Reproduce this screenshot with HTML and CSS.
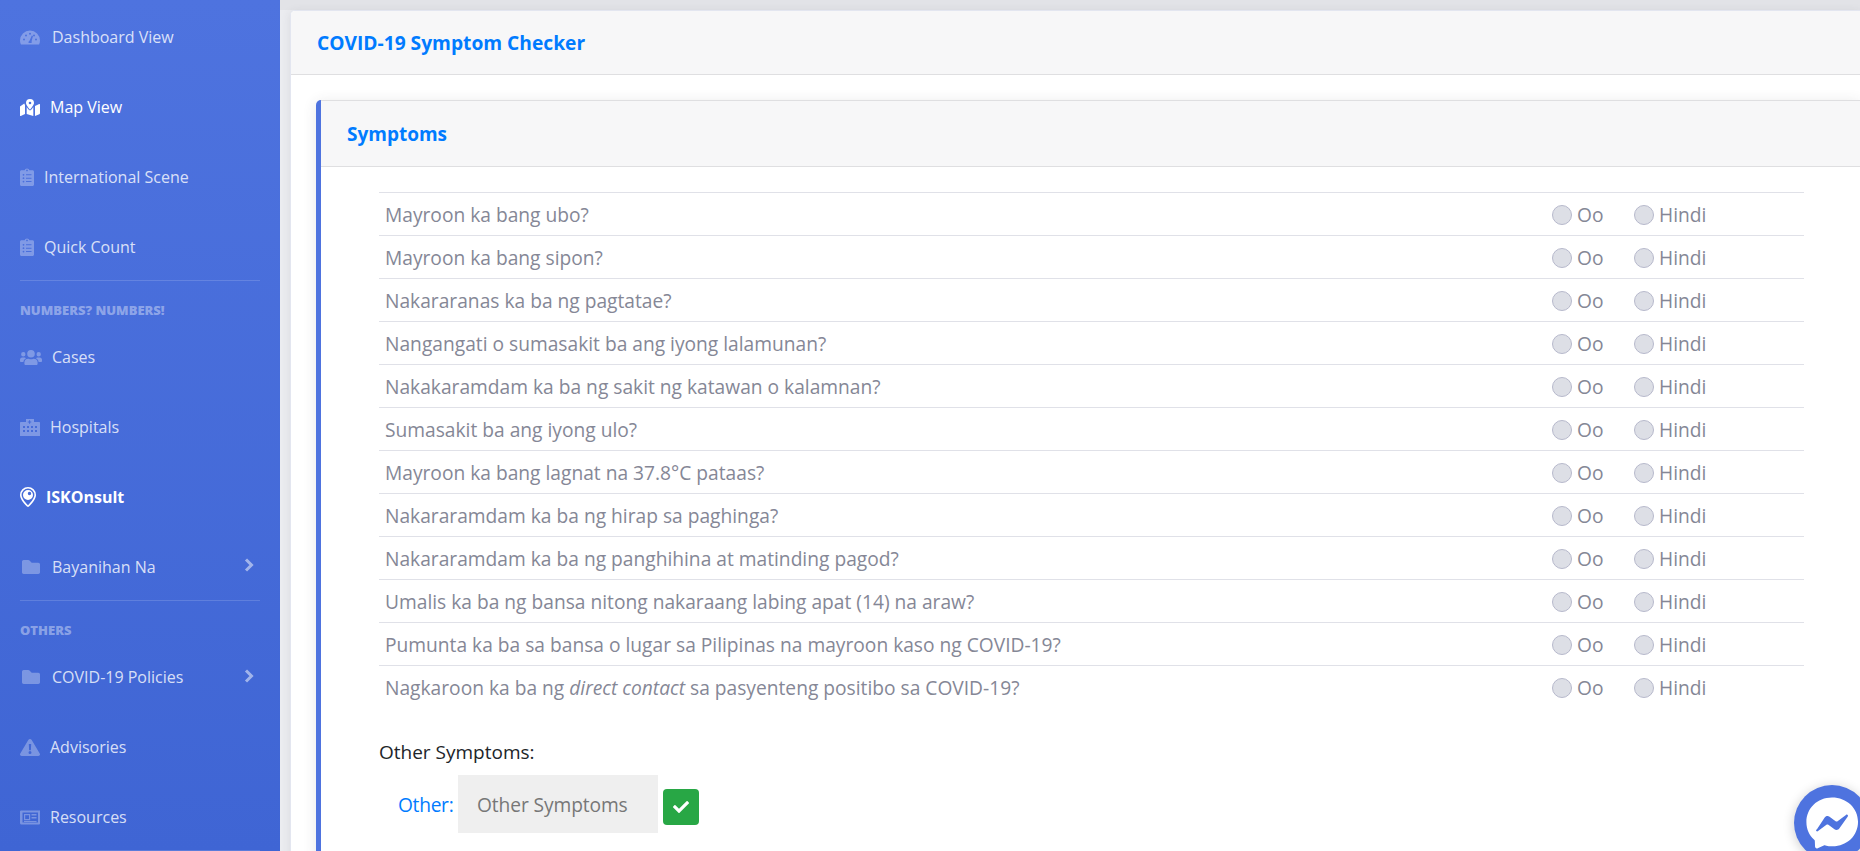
FILE: index.html
```html
<!DOCTYPE html>
<html lang="tl">
<head>
<meta charset="utf-8">
<title>COVID-19 Symptom Checker</title>
<link rel="stylesheet" href="styles.css">
</head>
<body>
<div class="layout">
  <nav class="sidebar">
    <a class="nav-item"><svg class="ic ic-dash" viewBox="0 0 20 14"><path d="M10 0a10 10 0 0 0-10 10c0 1.500.3 2.800.9 4h18.200c.6-1.200.9-2.500.9-4a10 10 0 0 0-10-10zm0 2.200a1 1 0 1 1 0 2 1 1 0 0 1 0-2zM4 10a1 1 0 1 1 0-2 1 1 0 0 1 0 2zm2-4a1 1 0 1 1 0-2 1 1 0 0 1 0 2zm5.400 6.500H8.600a1.700 1.700 0 0 1 .9-2.200L11.800 5l1.200.4-1.400 5.300c.3.500.1 1.300-.2 1.800zM14 6a1 1 0 1 1 0-2 1 1 0 0 1 0 2zm2 4a1 1 0 1 1 0-2 1 1 0 0 1 0 2z"/></svg><span class="t-dash">Dashboard View</span></a>
    <a class="nav-item active"><svg class="ic ic-wide" viewBox="0 0 20 17"><path fill-rule="evenodd" d="M10 0a4 4 0 0 0-4 4c0 1.800 2.600 5 3.600 6.200.2.300.6.300.8 0C11.400 9 14 5.800 14 4a4 4 0 0 0-4-4zm0 5.300a1.300 1.300 0 1 1 0-2.600 1.300 1.300 0 0 1 0 2.600zM.7 6.900A1.100 1.100 0 0 0 0 8v8.500c0 .4.400.7.800.5L5 15V6.200c-.3-.6-.5-1.100-.7-1.700L.7 6.900zM10 11.300c-.5 0-.9-.2-1.200-.6-.7-.8-1.400-1.700-2.100-2.700V15l6.600 2V8c-.6 1-1.400 1.900-2.100 2.700-.3.400-.7.600-1.200.6zM19.200 5.100 15 7v10l4.300-1.700c.4-.2.700-.6.700-1V5.600c0-.4-.4-.7-.8-.5z"/></svg><span class="t-map">Map View</span></a>
    <a class="nav-item"><svg class="ic ic-clip" viewBox="0 0 14 18"><use href="#clip"/></svg><span class="t-clip">International Scene</span></a>
    <a class="nav-item"><svg class="ic ic-clip" viewBox="0 0 14 18"><use href="#clip"/></svg><span class="t-clip">Quick Count</span></a>
    <hr class="divider">
    <div class="heading">NUMBERS? NUMBERS!</div>
    <a class="nav-item"><svg class="ic ic-users" viewBox="0 0 22 15"><path d="M3.300 6.500a2.200 2.200 0 1 0 0-4.400 2.200 2.200 0 0 0 0 4.400zm15.400 0a2.200 2.200 0 1 0 0-4.400 2.200 2.200 0 0 0 0 4.400zm1.100 1.100h-2.200c-.6 0-1.200.2-1.600.6 1.400.8 2.400 2.100 2.600 3.800h2.300c.6 0 1.100-.5 1.100-1.100V9.800c0-1.200-1-2.200-2.200-2.200zm-8.800 0A3.800 3.800 0 1 0 11 0a3.800 3.800 0 0 0 0 7.600zm2.600 1.100h-.3a5.300 5.300 0 0 1-4.600 0h-.3A4 4 0 0 0 4.400 12.700v1c0 .7.500 1.300 1.300 1.300h10.600c.8 0 1.300-.6 1.300-1.300v-1a4 4 0 0 0-4-4zM6 8.200c-.4-.4-1-.6-1.600-.6H2.200C1 7.600 0 8.600 0 9.800v1.100c0 .6.500 1.100 1.100 1.100h2.300c.2-1.700 1.200-3 2.600-3.800z"/></svg><span class="t-users">Cases</span></a>
    <a class="nav-item"><svg class="ic ic-wide" viewBox="0 0 20 17"><path fill-rule="evenodd" d="M6 0h8v3h5c.6 0 1 .4 1 1v13H0V4c0-.6.400-1 1-1h5V0zm3 1.300v1.200H7.800v1.100H9v1.200h1.100V3.600h1.200V2.500h-1.200V1.300H9zM3 7v2h2V7H3zm4 0v2h2V7H7zm4 0v2h2V7h-2zm4 0v2h2V7h-2zM3 11v2h2v-2H3zm4 0v2h2v-2H7zm4 0v2h2v-2h-2zm4 0v2h2v-2h-2z"/></svg><span class="t-map">Hospitals</span></a>
    <a class="nav-item active strong"><svg class="ic ic-pin" viewBox="0 0 16 20"><path fill-rule="evenodd" d="M8 0a8 8 0 0 0-8 8c0 3.200 2.800 7.600 7 11.600.6.500 1.400.5 2 0 4.200-4 7-8.400 7-11.600a8 8 0 0 0-8-8zm0 1.600A6.400 6.400 0 0 1 14.400 8c0 2.500-2.400 6.300-6.400 10.200C4 14.300 1.600 10.500 1.600 8A6.400 6.400 0 0 1 8 1.600zM8 3a5 5 0 1 0 0 10A5 5 0 0 0 8 3zm1.500 1.800a1.700 1.700 0 1 1 0 3.400 1.700 1.700 0 0 1 0-3.400z"/></svg><span class="t-pin">ISKOnsult</span></a>
    <a class="nav-item nav-tree"><svg class="ic ic-folder" viewBox="0 0 18 14"><path d="M16.300 2.700H9.700L7.500.5C7.200.200 6.800 0 6.300 0H1.700C.8 0 0 .8 0 1.700v10.600C0 13.200.8 14 1.700 14h14.600c.9 0 1.700-.8 1.700-1.700V4.400c0-.9-.8-1.700-1.700-1.700z"/></svg><span class="t-folder">Bayanihan Na</span><svg class="chev" viewBox="0 0 10 14"><path d="M2 1.500 7.500 7 2 12.500" fill="none" stroke="currentColor" stroke-width="3"/></svg></a>
    <hr class="divider">
    <div class="heading">OTHERS</div>
    <a class="nav-item nav-tree nav-policies"><svg class="ic ic-folder" viewBox="0 0 18 14"><path d="M16.300 2.700H9.700L7.500.5C7.200.200 6.800 0 6.300 0H1.700C.8 0 0 .8 0 1.700v10.600C0 13.200.8 14 1.700 14h14.600c.9 0 1.700-.8 1.700-1.700V4.400c0-.9-.8-1.700-1.700-1.700z"/></svg><span class="t-folder">COVID-19 Policies</span><svg class="chev" viewBox="0 0 10 14"><path d="M2 1.500 7.500 7 2 12.500" fill="none" stroke="currentColor" stroke-width="3"/></svg></a>
    <a class="nav-item"><svg class="ic ic-wide" viewBox="0 0 20 17"><path fill-rule="evenodd" d="M8.300 1 .3 14.500C-.5 15.800.4 17 1.700 17h16.600c1.300 0 2.200-1.200 1.400-2.500L11.700 1c-.8-1.300-2.600-1.300-3.400 0zM8.800 5h2.400l-.3 6.200H9.100L8.800 5zM10 15a1.500 1.500 0 1 1 0-3 1.500 1.500 0 0 1 0 3z"/></svg><span class="t-map">Advisories</span></a>
    <a class="nav-item"><svg class="ic ic-wide" viewBox="0 0 20 14"><path fill-rule="evenodd" d="M1 0h19v13a1 1 0 0 1-1 1H1.500A1.500 1.500 0 0 1 0 12.500V1a1 1 0 0 1 1-1zm1.500 2v10H18V2H2.500zM4 3.500h6.200v6.200H4V3.500zm1.200 1.200v3.800H9V4.700H5.200zM11.500 3.500h5v1.500h-5V3.500zm0 3h5V8h-5V6.500zM4 10.500h12.500v1H4v-1z"/></svg><span class="t-map">Resources</span></a>
    <hr class="divider">
  </nav>

  <main class="content">
    <section class="page-card">
      <header class="page-head">COVID-19 Symptom Checker</header>
      <div class="page-body">
        <section class="card">
          <header class="card-head">Symptoms</header>
          <div class="card-body">
            <table class="questions">
              <tr><td>Mayroon ka bang ubo?</td><td class="opt"><span class="radio"></span>Oo</td><td class="opt"><span class="radio"></span>Hindi</td></tr>
              <tr><td>Mayroon ka bang sipon?</td><td class="opt"><span class="radio"></span>Oo</td><td class="opt"><span class="radio"></span>Hindi</td></tr>
              <tr><td>Nakararanas ka ba ng pagtatae?</td><td class="opt"><span class="radio"></span>Oo</td><td class="opt"><span class="radio"></span>Hindi</td></tr>
              <tr><td>Nangangati o sumasakit ba ang iyong lalamunan?</td><td class="opt"><span class="radio"></span>Oo</td><td class="opt"><span class="radio"></span>Hindi</td></tr>
              <tr><td>Nakakaramdam ka ba ng sakit ng katawan o kalamnan?</td><td class="opt"><span class="radio"></span>Oo</td><td class="opt"><span class="radio"></span>Hindi</td></tr>
              <tr><td>Sumasakit ba ang iyong ulo?</td><td class="opt"><span class="radio"></span>Oo</td><td class="opt"><span class="radio"></span>Hindi</td></tr>
              <tr><td>Mayroon ka bang lagnat na 37.8°C pataas?</td><td class="opt"><span class="radio"></span>Oo</td><td class="opt"><span class="radio"></span>Hindi</td></tr>
              <tr><td>Nakararamdam ka ba ng hirap sa paghinga?</td><td class="opt"><span class="radio"></span>Oo</td><td class="opt"><span class="radio"></span>Hindi</td></tr>
              <tr><td>Nakararamdam ka ba ng panghihina at matinding pagod?</td><td class="opt"><span class="radio"></span>Oo</td><td class="opt"><span class="radio"></span>Hindi</td></tr>
              <tr><td>Umalis ka ba ng bansa nitong nakaraang labing apat (14) na araw?</td><td class="opt"><span class="radio"></span>Oo</td><td class="opt"><span class="radio"></span>Hindi</td></tr>
              <tr><td>Pumunta ka ba sa bansa o lugar sa Pilipinas na mayroon kaso ng COVID-19?</td><td class="opt"><span class="radio"></span>Oo</td><td class="opt"><span class="radio"></span>Hindi</td></tr>
              <tr class="last-row"><td>Nagkaroon ka ba ng <em>direct contact</em> sa pasyenteng positibo sa COVID-19?</td><td class="opt"><span class="radio"></span>Oo</td><td class="opt"><span class="radio"></span>Hindi</td></tr>
            </table>
            <p class="other-title">Other Symptoms:</p>
            <div class="other-row">
              <span class="other-label">Other:</span>
              <span class="other-input">Other Symptoms</span>
              <span class="check-btn"><svg viewBox="0 0 512 512"><path fill="#fff" d="M174 439 7 273a25 25 0 0 1 0-36l36-36a25 25 0 0 1 36 0l113 112L433 73a25 25 0 0 1 36 0l36 36a25 25 0 0 1 0 36L210 439a25 25 0 0 1-36 0z"/></svg></span>
            </div>
          </div>
        </section>
      </div>
    </section>
  </main>
</div>

<div class="messenger"><svg viewBox="0 0 60 60"><path fill="#fff" d="M30 6C16 6 6 16.200 6 29c0 6.800 2.800 12.600 7.300 16.600.4.300.6.800.6 1.300l.2 5.100c0 1.300 1.300 2.200 2.500 1.600l5.700-2.500c.5-.2 1-.2 1.500-.1 2 .6 4.200.9 6.600.9 14 0 24-10.200 24-23S44 6 30 6z"/><path fill="#4e73df" d="M15.600 36.400 23 25c1-1.600 3.200-2 4.700-.9l5.700 4.300c.6.400 1.300.4 1.800 0l7.900-6c1-.800 2.400.4 1.700 1.500L37 35c-1 1.600-3.200 2-4.700.9l-5.700-4.300c-.6-.4-1.300-.4-1.800 0l-7.900 6c-1 .8-2.400-.4-1.700-1.500z"/></svg></div>

<svg class="defs" aria-hidden="true"><defs><symbol id="clip" viewBox="0 0 14 18"><path fill-rule="evenodd" d="M12.500 2.300H9.400a2.500 2.500 0 0 0-4.800 0H1.500C.7 2.300 0 3 0 3.800v12.700c0 .8.700 1.500 1.500 1.500h11c.8 0 1.500-.7 1.500-1.500V3.800c0-.8-.7-1.500-1.500-1.500zM3.500 14.500a.9.900 0 1 1 0-1.800.9.900 0 0 1 0 1.800zm0-3.400a.9.900 0 1 1 0-1.800.9.900 0 0 1 0 1.800zm0-3.400a.9.900 0 1 1 0-1.800.9.900 0 0 1 0 1.800zM7 1.500a.9.900 0 1 1 0 1.800.9.900 0 0 1 0-1.800zm4.500 12.600h-5.500v-1h5.500v1zm0-3.400h-5.500v-1h5.500v1zm0-3.400h-5.500v-1h5.500v1z"/></symbol></defs></svg>
</body>
</html>
```
FILE: styles.css
```css
* { box-sizing: border-box; }
html, body { margin: 0; height: 100%; overflow: hidden; }
body { font-family: "Open Sans", "Noto Sans", sans-serif; background: #fff; color: #858796; }
.defs { width: 0; height: 0; position: absolute; }
.layout { display: flex; height: 851px; overflow: hidden; }

.sidebar {
  width: 280px; flex: none; padding: 2px 20px 0;
  background: linear-gradient(180deg, #4e73df 0%, #3f65d4 100%);
  color: rgba(255,255,255,.8); overflow: hidden;
  display: flex; flex-direction: column;
}
.nav-item { display: flex; align-items: center; height: 70px; font-size: 16px; flex: none; }
.nav-tree { position: relative; }
.nav-item.active { color: #fff; }
.nav-item.strong { font-weight: 700; }
.ic { fill: #fff; opacity: .3; flex: none; }
.active .ic { opacity: 1; }
.ic-dash { width: 20px; height: 15px; }
.ic-wide { width: 20px; height: 17px; }
.ic-clip { width: 14px; height: 18px; }
.ic-users { width: 22px; height: 15px; }
.ic-pin { width: 16px; height: 20px; }
.ic-folder { width: 18px; height: 14px; margin-left: 2px; }
.t-dash { margin-left: 12px; }
.t-users { margin-left: 10px; }
.t-map { margin-left: 10px; }
.t-clip { margin-left: 10px; }
.t-pin { margin-left: 10px; }
.t-folder { margin-left: 12px; }
.chev { width: 10px; height: 14px; position: absolute; right: 6px; top: 26px; opacity: .5; color: #fff; }
.nav-policies .chev { top: 27px; }
.divider { width: 100%; margin: 0; border: 0; border-top: 1px solid rgba(255,255,255,.15); flex: none; }
.nav-item + .divider { margin-top: -2px; }
.heading { font-size: 13px; font-weight: 800; color: rgba(255,255,255,.4); height: 41px; padding-top: 22px; line-height: 14px; flex: none; white-space: nowrap; }

.content {
  flex: 1; min-width: 0; padding: 10px 0 0 10px; overflow: hidden;
  background: linear-gradient(#e2e3e7, #e2e3e7) no-repeat top / 100% 10px, #ebecf0;
}
.page-card { background: #fff; border: 1px solid #e3e6f0; border-right: 0; border-radius: 5px 0 0 0; height: calc(100% + 10px); overflow: hidden; box-shadow: 0 2px 10px rgba(58,59,69,.1); }
.page-head { height: 64px; padding: 0 26px; line-height: 63px; background: #f7f7f8; border-bottom: 1px solid #dfdfe1; color: #007bff; font-weight: 700; font-size: 19.200px; }
.page-body { padding: 25px 0 0 25px; height: calc(100% - 64px); overflow: hidden; }
.card { border-left: 5px solid #4e73df; border-radius: 5px 0 0 0; box-shadow: 0 2px 14px rgba(58,59,69,.12); background: #fff; height: 100%; }
.card-head { height: 67px; padding: 0 26px; line-height: 66px; background: #f7f7f8; border-top: 1px solid #dfdfe1; border-bottom: 1px solid #dfdfe1; color: #007bff; font-weight: 700; font-size: 19px; }
.card-body { padding: 25px 0 0 58px; }

.questions { border-collapse: collapse; width: 1425px; table-layout: fixed; font-size: 19.200px; }
.questions td { height: 43px; padding: 0 6px; border-top: 1px solid #e0e1e8; border-bottom: 1px solid #e0e1e8; vertical-align: middle; white-space: nowrap; }
.questions .last-row td { border-bottom: 0; }
.questions td.opt { padding: 0; }
.questions td:nth-child(2) { width: 82px; }
.questions td:nth-child(3) { width: 170px; }
.radio { display: inline-block; width: 20px; height: 20px; border-radius: 50%; background: #dddfe6; border: 1px solid #b7b9cc; margin-right: 5px; vertical-align: -3px; }

.other-title { margin: 31px 0 0; color: #212529; font-size: 19px; line-height: 24px; }
.other-row { display: flex; align-items: flex-start; margin-top: 11px; padding-left: 19px; font-size: 19.200px; }
.other-label { color: #007bff; width: 55px; height: 58px; line-height: 59px; margin-right: 5px; white-space: nowrap; letter-spacing: -.3px; }
.other-input { width: 200px; height: 58px; line-height: 59px; background: #efefef; padding-left: 19px; color: #777; white-space: nowrap; letter-spacing: -.1px; }
.check-btn { width: 36px; height: 36px; background: #28a745; border-radius: 4px; margin: 14px 0 0 5px; display: flex; align-items: center; justify-content: center; }
.check-btn svg { width: 16px; height: 16px; }

.messenger { position: fixed; right: -10px; bottom: -10px; width: 76px; height: 76px; border-radius: 50%; background: #4e73df; box-shadow: 0 2px 12px rgba(0,0,0,.2); display: flex; align-items: center; justify-content: center; }
.messenger svg { width: 64px; height: 64px; flex: none; }
```
